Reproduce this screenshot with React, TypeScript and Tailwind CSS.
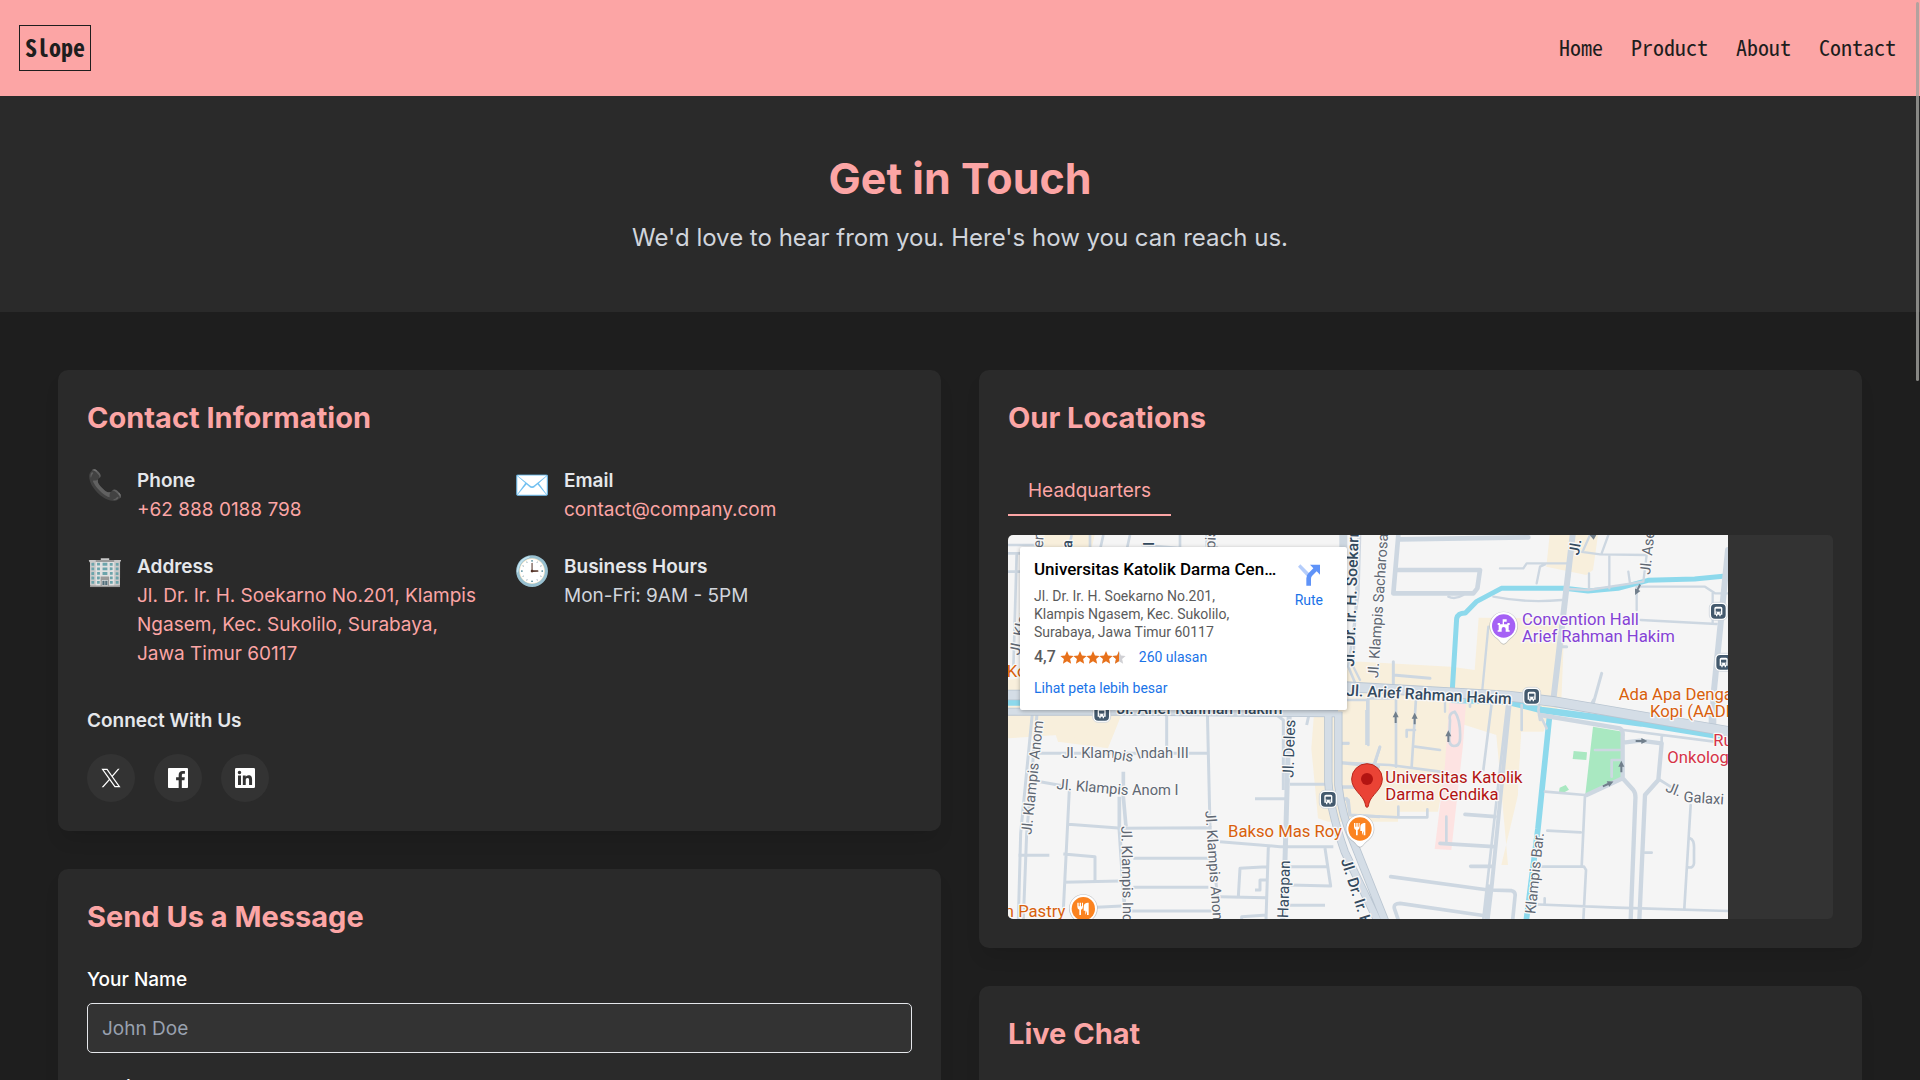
import React from "react";

const INTER = "font-['Inter',sans-serif]";

type LabelProps = {
  x: number;
  y: number;
  angle?: number;
  size?: number;
  color?: string;
  weight?: number;
  anchor?: "start" | "middle" | "end";
  children: string;
};

function MapLabel({ x, y, angle = 0, size = 44, color = "#5f6772", weight = 400, anchor = "start", children }: LabelProps) {
  return (
    <text
      x={x}
      y={y}
      transform={`rotate(${angle} ${x} ${y})`}
      fontSize={size}
      fontWeight={weight}
      fill={color}
      textAnchor={anchor}
      stroke="#f8f8f8"
      strokeWidth={8}
      strokeLinejoin="round"
      paintOrder="stroke"
    >
      {children}
    </text>
  );
}

function TransitStop({ x, y }: { x: number; y: number }) {
  return (
    <g transform={`translate(${x} ${y})`}>
      <rect x="-27" y="-27" width="54" height="54" rx="16" fill="#fff" stroke="#c4ccd4" strokeWidth="2" />
      <rect x="-22" y="-22" width="44" height="44" rx="12" fill="#43596d" />
      <path d="M-12 -9q0-5 5-5h14q5 0 5 5v19h-5v5h-4v-5h-6v5h-4v-5h-5z" fill="#fff" />
      <rect x="-8" y="-8" width="16" height="9" fill="#43596d" />
      <circle cx="-6" cy="5" r="2" fill="#43596d" />
      <circle cx="6" cy="5" r="2" fill="#43596d" />
    </g>
  );
}

function PoiPin({ x, y, color, kind }: { x: number; y: number; color: string; kind: "food" | "hall" }) {
  return (
    <g transform={`translate(${x} ${y})`}>
      <path d="M0 56C-7 56-12 46-20 39C-34 29-43 16-43 0A43 43 0 0 1 43 0C43 16 34 29 20 39C12 46 7 56 0 56Z" fill="#9aa0a6" opacity=".55" />
      <path d="M0 53C-7 53-12 43-20 36C-33 27-41 14-41 -1A41 41 0 0 1 41 -1C41 14 33 27 20 36C12 43 7 53 0 53Z" fill="#fff" />
      <circle r="35" fill={color} />
      {kind === "food" ? (
        <path
          d="M-18 -18v12q0 7 6 9v16h5V3q6-2 6-9v-12h-3v11h-3v-11h-4v11h-3v-11zM6 19V6H1v-12q0-10 11-12h4v37h-5V6z"
          fill="#fff"
        />
      ) : (
        <path d="M-18 17V13h3V-3h-3v-6h7v4h8v-15h12v7H1v8h10v-4h7v6h-3v16h3v4H6V9a6 6 0 0 0-12 0v8z" fill="#fff" />
      )}
    </g>
  );
}

function Arrow({ x, y, angle = 0 }: { x: number; y: number; angle?: number }) {
  return (
    <path
      transform={`translate(${x} ${y}) rotate(${angle})`}
      d="M0 -18L9 0H3V17H-3V0H-9Z"
      fill="#717f8c"
    />
  );
}

function CampusMap() {
  return (
    <svg
      viewBox="0 0 2160 1152"
      className="block h-96 w-[720px] max-w-full shrink-0 font-['Roboto',sans-serif]"
      preserveAspectRatio="xMinYMin slice"
      role="img"
      aria-label="Map of Universitas Katolik Darma Cendika"
    >
      <rect width="2160" height="1152" fill="#f5f5f5" />

      {/* Built-up blocks */}
      <g fill="#f8efdc">
        <path d="M90 0H260L240 90H80zM0 435L36 430V540H340L300 640L150 620L150 600L0 610z" />
        <path d="M930 380H1060L1330 395L1400 405L1412 248L1670 250L1660 500L1600 600L1540 590L1530 780L1480 990H1500L1465 600L1340 560L1290 830L1170 830V860H960L930 850L910 640z" />
        <path d="M1625 0H1770L1755 105L1735 120L1615 95z" />
      </g>
      <path d="M0 495H310L300 580L150 620L130 560L0 600z" fill="#f8efdc" />
      <path d="M1325 490H1375L1365 630L1330 945L1280 942L1310 700z" fill="#fde3e2" />
      <path d="M1540 590H1610V560H1660L1610 600L1540 1150H1510z" fill="#f5f5f5" />
      <path d="M1755 575L1845 590L1845 725L1732 778zM1697 648L1737 652L1735 675L1694 672zM1655 758l18-8 10 14-18 10-12-4z" fill="#a9e8c1" />

      {/* Canal */}
      <g fill="none" stroke="#8dd9ec" strokeLinejoin="round">
        <path d="M1332 480L1346 250Q1350 234 1372 234L1405 200L1480 160H1670L1740 168L1830 160L1920 136L2060 132L2165 122" strokeWidth="15" />
        <path d="M0 502H60M1330 494L1500 500L1600 525L1900 565L2165 608" strokeWidth="20" />
        <path d="M1625 540L1590 880L1555 1155" strokeWidth="17" />
        <path d="M1695 0L1680 150M335 790V830" strokeWidth="8" />
      </g>

      {/* Minor streets, north */}
      <g transform="translate(996 -45)" fill="none" stroke="#cdd7e1" strokeWidth="7" strokeLinejoin="round" strokeLinecap="round">
        <path d="M55 45L40 440L60 480M480 145H550L560 130H685M590 190L600 140L615 133M460 230Q560 250 665 240M720 95L780 103L920 105L910 185L745 210L685 207M750 45L730 90M805 45L785 100M808 105V205M747 160V205M865 155L870 190M890 200V270M900 200H1095L1125 220H1164M1118 220V310M902 300L1130 312M445 320L425 530M325 230Q345 240 370 225M315 530V575M370 535V545" />
        <path d="M175 45L160 220H400L412 205L420 150H175M180 58L565 52" strokeWidth="14" />
        <path d="M160 425V500M160 465L270 475M785 460L760 550M660 380H680" strokeWidth="9" />
        <path d="M0 498H160V535H85V675M0 540H85M168 540V740M228 535L215 740M200 650V630H225M225 680L300 690M502 550L430 1195M545 555V630M455 550L430 750M390 540V560" strokeWidth="8" />
        <path d="M698 45L640 540M1164 90L1120 530V620" strokeWidth="18" />
      </g>
      <g transform="translate(-24 -45)" fill="none" stroke="#cdd7e1" strokeWidth="8">
        <path d="M24 75H110M24 100H150M24 155H70M50 100L40 450M215 45L205 90M270 45V90M310 45L300 90M390 45L380 90M425 75L550 85M540 45V80M620 45V80" />
        <path d="M1030 45V90L1000 570" strokeWidth="24" />
        <path d="M1080 45L1075 220L1045 440L1070 500" />
      </g>

      {/* Minor streets, south-west */}
      <g transform="translate(-24 495)" fill="none" stroke="#cdd7e1" strokeWidth="9" strokeLinejoin="round">
        <path d="M98 30L62 400L55 660M112 30L80 400L70 660M55 466H148M115 160H628M120 245L205 260M208 270L190 630M205 373L365 385L635 383M190 462L285 470V545M190 547L360 543M400 475H630M400 562H625M290 622L365 618M390 633H635M500 40V150M622 30L630 380L660 660M680 45H830L850 60V270M870 253H975M765 296H855M660 425L840 440H1000M805 440L798 660M975 445L992 558L870 555M870 500H985M715 590L720 505L800 500M765 570H780V540H800M660 590L798 593M870 616H975M725 660V650L800 645M300 560" />
        <path d="M370 215V290L378 380M358 290V385L375 640" strokeWidth="11" />
        <path d="M868 30L855 480L848 660" strokeWidth="15" />
        <path d="M920 75L930 30M1020 130H1048M1100 30V135M1020 188L1140 200M1020 260H1060M1030 295L1045 300L1050 345L1140 350M1120 200L1140 140" />
      </g>

      {/* Minor streets, south-east */}
      <g transform="translate(996 495)" fill="none" stroke="#cdd7e1" strokeWidth="8" strokeLinejoin="round" strokeLinecap="round">
        <path d="M0 130H25M82 0V130M120 140L105 190M0 188L150 195L300 215M10 262H100M20 295L30 345L175 352H262V328M175 350V320M319 350V428M330 60Q325 40 344 35Q363 60 360 120Q358 138 342 138Q325 136 328 110zM615 275L735 285M735 285L725 500M622 392L722 397M605 500H732L738 510L730 660M560 612L830 623L1164 633M614 595V610M765 150H840M840 180H815V230M600 45L620 85M600 60L595 30L600 0M850 90L1164 130M965 110V130M1052 315L1033 625M1050 415Q1064 420 1062 450V490Q1060 505 1045 502M915 458H935M750 20L760 0M1110 30V80M960 240L1000 265" />
        <path d="M375 343L465 350M300 430L460 440M392 499H455M152 530L445 570L515 572Q528 575 525 590L518 660M440 648L180 610Q160 610 163 625L175 660" strokeWidth="11" />
        <path d="M510 0L455 560L443 660" strokeWidth="12" />
        <path d="M445 560L440 660" strokeWidth="14" />
        <path d="M600 45L840 85Q850 90 848 110V235L880 270Q888 280 886 300L872 660M740 285L848 235M850 128L900 122L965 130L955 240L915 285L898 660" strokeWidth="13" />
      </g>

      {/* Arterial roads */}
      <g fill="none" stroke="#b9c5d1" strokeLinejoin="round">
        <path d="M0 480H340L980 500M1010 455L1500 483L1640 500L2165 590" strokeWidth="32" />
        <path d="M0 530H340L990 535" strokeWidth="24" />
        <path d="M961 530V740Q965 820 1010 950L1110 1160M991 530V750Q1000 840 1040 930L1132 1160" strokeWidth="25" />
      </g>
      <g fill="none" stroke="#d4dde6" strokeLinejoin="round">
        <path d="M0 480H340L980 500M1010 455L1500 483L1640 500L2165 590" strokeWidth="27" />
        <path d="M0 530H340L990 535" strokeWidth="19" />
        <path d="M961 530V740Q965 820 1010 950L1110 1160M991 530V750Q1000 840 1040 930L1132 1160" strokeWidth="20" />
      </g>

      <Arrow x={1163} y={547} />
      <Arrow x={1220} y={551} />
      <Arrow x={1321} y={604} />
      <Arrow x={1840} y={695} />
      <Arrow x={1900} y={618} angle={90} />
      <Arrow x={1800} y={747} angle={65} />
      <Arrow x={1889} y={164} angle={205} />
      <path d="M1745 0h20l-8 14z" fill="#717f8c" />

      {/* Street names */}
      <MapLabel x={104} y={40} angle={-85}>en</MapLabel>
      <MapLabel x={192} y={40} angle={-87} color="#344a5e" weight={500}>a</MapLabel>
      <MapLabel x={437} y={32} angle={-90} color="#344a5e" weight={500}>l</MapLabel>
      <MapLabel x={621} y={42} angle={-87}>pis</MapLabel>
      <MapLabel x={34} y={362} angle={-78}>Jl. Klampis</MapLabel>
      <MapLabel x={1038} y={395} angle={-88} color="#344a5e" weight={500} size={47}>Jl. Dr. Ir. H. Soekarno</MapLabel>
      <MapLabel x={1110} y={430} angle={-86}>Jl. Klampis Sacharosa</MapLabel>
      <MapLabel x={1712} y={62} angle={-80} color="#344a5e" weight={500}>Jl.</MapLabel>
      <MapLabel x={1926} y={120} angle={-84}>Jl. Asem</MapLabel>
      <MapLabel x={1014} y={482} angle={3} color="#344a5e" weight={500} size={47}>Jl. Arief Rahman Hakim</MapLabel>
      <MapLabel x={326} y={537} color="#344a5e" weight={500} size={47}>Jl. Arief Rahman Hakim</MapLabel>
      <MapLabel x={70} y={900} angle={-84}>Jl. Klampis Anom</MapLabel>
      <MapLabel x={162} y={668}>Jl. Klam</MapLabel>
      <MapLabel x={316} y={672} angle={9}>pis</MapLabel>
      <MapLabel x={380} y={668}>\ndah III</MapLabel>
      <MapLabel x={145} y={762} angle={5}>Jl. Klampis</MapLabel>
      <MapLabel x={372} y={780}>Anom I</MapLabel>
      <MapLabel x={340} y={874} angle={89}>Jl. Klampis Indah</MapLabel>
      <MapLabel x={592} y={828} angle={86}>Jl. Klampis Anom</MapLabel>
      <MapLabel x={856} y={728} angle={-88} color="#344a5e" size={46}>Jl. Deles</MapLabel>
      <MapLabel x={840} y={1150} angle={-88} color="#344a5e" size={46}>Harapan</MapLabel>
      <MapLabel x={998} y={975} angle={72} color="#344a5e" weight={500} size={46}>Jl. Dr. Ir. H.</MapLabel>
      <MapLabel x={1582} y={1138} angle={-84}>Klampis Bar.</MapLabel>
      <MapLabel x={1970} y={768} angle={22}>Jl.</MapLabel>
      <MapLabel x={2026} y={800} angle={4}>Galaxi</MapLabel>

      {/* Places */}
      <TransitStop x={281} y={535} />
      <TransitStop x={961} y={793} />
      <TransitStop x={1571} y={484} />
      <TransitStop x={2131} y={229} />
      <TransitStop x={2147} y={382} />
      <PoiPin x={1487} y={273} color="#a561f5" kind="hall" />
      <PoiPin x={1056} y={882} color="#fb8320" kind="food" />
      <PoiPin x={226} y={1121} color="#fb8320" kind="food" />
      <MapLabel x={1542} y={270} size={50} color="#8542d6">Convention Hall</MapLabel>
      <MapLabel x={1542} y={321} size={50} color="#8542d6">Arief Rahman Hakim</MapLabel>
      <MapLabel x={1832} y={496} size={50} color="#d9600c">Ada Apa Dengan</MapLabel>
      <MapLabel x={1926} y={546} size={50} color="#d9600c">Kopi (AADK)</MapLabel>
      <MapLabel x={2116} y={632} size={50} color="#d63347">Rumah</MapLabel>
      <MapLabel x={1978} y={683} size={50} color="#d63347">Onkologi</MapLabel>
      <MapLabel x={-4} y={427} size={50} color="#d9600c">Kopi</MapLabel>
      <MapLabel x={1002} y={905} size={50} color="#d9600c" anchor="end">Bakso Mas Roy</MapLabel>
      <MapLabel x={172} y={1146} size={50} color="#d9600c" anchor="end">n Pastry</MapLabel>
      <MapLabel x={1132} y={744} size={50} color="#b31412">Universitas Katolik</MapLabel>
      <MapLabel x={1132} y={794} size={50} color="#b31412">Darma Cendika</MapLabel>
      <path
        d="M1077 817C1073 817 1073 812 1071 804C1064 779 1031 764 1031 732A46 46 0 0 1 1123 732C1123 764 1090 779 1083 804C1081 812 1081 817 1077 817Z"
        fill="#ea4335"
        stroke="#b9271c"
        strokeWidth="3"
      />
      <circle cx="1077" cy="732" r="18" fill="#b31412" />
    </svg>
  );
}

const STAR = "M10 0l3 6.8 7.2.7-5.4 4.9 1.6 7.2L10 15.8l-6.3 3.8 1.6-7.2L-.2 7.500l7.200-.7z";

function Stars() {
  return (
    <svg viewBox="0 0 100 20" className="h-[13px] w-[66px]" role="img" aria-label="4.7 of 5 stars">
      {[0, 1, 2, 3].map((i) => (
        <path key={i} d={STAR} transform={`translate(${i * 20} 0)`} fill="#e7711b" />
      ))}
      <path d={STAR} transform="translate(80 0)" fill="#d0d0d4" />
      <path d="M90 0v15.800l-6.300 3.800 1.600-7.200-5.500-4.900 7.200-.7z" fill="#e7711b" />
    </svg>
  );
}

function PlaceCard() {
  return (
    <div className="absolute left-3 top-3 flex h-[163px] w-[327px] justify-between rounded-[2px] bg-white pl-[14px] pr-6 pt-3 font-['Roboto',sans-serif] text-[14px] leading-[18px] text-[#5b5b5b] shadow-[0_1px_4px_rgba(0,0,0,0.3)]">
      <div className="w-[246px]">
        <h3 className="truncate text-[17px] font-medium leading-5 text-black">Universitas Katolik Darma Cendika</h3>
        <p className="mt-2 w-[210px]">Jl. Dr. Ir. H. Soekarno No.201, Klampis Ngasem, Kec. Sukolilo, Surabaya, Jawa Timur 60117</p>
        <div className="mt-[7px] flex items-center">
          <span className="mr-1 text-[16px] font-medium">4,7</span>
          <Stars />
          <a href="#ulasan" className="ml-[13px] text-[#1a73e8]">260 ulasan</a>
        </div>
        <a href="#peta" className="mt-[13px] block text-[#1a73e8]">Lihat peta lebih besar</a>
      </div>
      <a href="#rute" className="flex h-14 flex-col items-center pt-[5px] text-[#1a73e8]">
        <svg viewBox="0 0 66 64" className="mb-[5px] h-[22px] w-[22px]" aria-hidden="true">
          <path d="M0 7L7 0L36 29L28 37z" fill="#b5cdfb" />
          <path d="M25 64V42Q25 32 32 26L46 12L36 1H66V31L56 21L42 35Q39 38 39 44V64z" fill="#5f93f8" />
        </svg>
        Rute
      </a>
    </div>
  );
}

function Card({ title, children }: { title: string; children?: React.ReactNode }) {
  return (
    <section className="rounded-[10px] bg-[#2a2a2a] p-[29px] shadow-[0_12px_18px_-4px_rgba(0,0,0,0.1)]">
      <h2 className="mb-[29px] text-[29px] font-bold leading-[38px] text-[#fca5a5]">{title}</h2>
      {children}
    </section>
  );
}

function InfoItem({ icon, label, href, children }: { icon: string; label: string; href?: string; children: string }) {
  return (
    <div className="flex items-start">
      <span className="mr-[14px] text-[29px] leading-[38px]" aria-hidden="true">{icon}</span>
      <div>
        <h3 className="font-semibold text-gray-200">{label}</h3>
        {href ? (
          <a href={href} className="block text-[#fca5a5]">{children}</a>
        ) : (
          <p className="text-gray-300">{children}</p>
        )}
      </div>
    </div>
  );
}

function SocialLink({ label, children }: { label: string; children: React.ReactNode }) {
  return (
    <a href="#social" aria-label={label} className="flex size-12 items-center justify-center rounded-full bg-[#333333] text-white">
      {children}
    </a>
  );
}

function Field({ id, label, placeholder, type = "text" }: { id: string; label: string; placeholder: string; type?: string }) {
  return (
    <div className="mb-5">
      <label htmlFor={id} className="mb-[9px] block font-medium text-white">{label}</label>
      <input
        id={id}
        type={type}
        placeholder={placeholder}
        className="block h-[50px] w-full rounded-[5px] border border-gray-200 bg-[#333333] px-[14px] text-white placeholder:text-gray-400"
      />
    </div>
  );
}

export default function App() {
  return (
    <div className={`h-screen overflow-y-auto bg-[#1e1e1e] text-[19px] leading-[29px] text-white [scrollbar-width:none] ${INTER}`}>
      <header className="flex h-24 items-center justify-between bg-[#fca5a5] pl-[19px] pr-6 font-['Noto_Sans_Mono_CJK_JP','Liberation_Mono',monospace] text-[22px] text-[#1e1e1e]">
        <a href="#home" className="flex h-[46px] items-center border border-[#1e1e1e] px-[5px] pb-1 text-[24px] font-bold">Slope</a>
        <nav className="flex gap-7 pb-1">
          <a href="#home">Home</a>
          <a href="#product">Product</a>
          <a href="#about">About</a>
          <a href="#contact">Contact</a>
        </nav>
      </header>

      <div className="bg-[#2a2a2a] pb-[57px] pt-[58px] text-center">
        <h1 className="mb-[19px] text-[43px] font-bold leading-[48px] text-[#fca5a5]">Get in Touch</h1>
        <p className="text-[24px] leading-[34px] text-gray-300">We'd love to hear from you. Here's how you can reach us.</p>
      </div>

      <main className="grid grid-cols-2 items-start gap-[38px] px-[58px] py-[58px]">
        <div className="flex flex-col gap-[38px]">
          <Card title="Contact Information">
            <div className="mb-[38px] grid grid-cols-2 gap-x-[29px] gap-y-[28px]">
              <InfoItem icon="📞" label="Phone" href="#phone">+62 888 0188 798</InfoItem>
              <InfoItem icon="✉️" label="Email" href="#email">contact@company.com</InfoItem>
              <InfoItem icon="🏢" label="Address" href="#address">Jl. Dr. Ir. H. Soekarno No.201, Klampis Ngasem, Kec. Sukolilo, Surabaya, Jawa Timur 60117</InfoItem>
              <InfoItem icon="🕒" label="Business Hours">Mon-Fri: 9AM - 5PM</InfoItem>
            </div>
            <h3 className="mb-[19px] font-semibold text-gray-200">Connect With Us</h3>
            <div className="flex gap-[19px]">
              <SocialLink label="X">
                <svg viewBox="0 0 24 24" className="size-5" fill="currentColor" aria-hidden="true">
                  <path fillRule="evenodd" d="M.5 1h7.200l5.600 7.900L20.300 1h2L14.200 10.200 23.500 23.200h-7.200l-6-8.500L2.900 23.200H.8L9.400 13.400zM3.300 2.500l13.800 19.200h3.500L6.900 2.500z" />
                </svg>
              </SocialLink>
              <SocialLink label="Facebook">
                <svg viewBox="0 0 24 24" className="size-5" fill="currentColor" aria-hidden="true">
                  <path d="M22.700 0H1.300C.6 0 0 .6 0 1.300v21.400c0 .7.6 1.300 1.300 1.300h11.500v-9.300H9.700v-3.600h3.100V8.400c0-3.100 1.900-4.800 4.700-4.800 1.300 0 2.500.1 2.800.1V7h-1.900c-1.500 0-1.800.7-1.800 1.800v2.300h3.600l-.5 3.600h-3.100V24h6.100c.7 0 1.300-.6 1.300-1.300V1.300C24 .6 23.400 0 22.700 0z" />
                </svg>
              </SocialLink>
              <SocialLink label="LinkedIn">
                <svg viewBox="0 0 24 24" className="size-5" fill="currentColor" aria-hidden="true">
                  <path fillRule="evenodd" d="M1.500 0h21Q24 0 24 1.500v21q0 1.500-1.500 1.500h-21Q0 24 0 22.500v-21Q0 0 1.500 0zM3.600 9h3.600v11.500H3.600zM5.400 3.300a2.100 2.100 0 1 1 0 4.200 2.100 2.100 0 0 1 0-4.200zM9.400 9h3.400v1.600c.6-1 1.700-1.900 3.400-1.900 3.600 0 4.300 2.400 4.300 5.500v6.300h-3.600v-5.600c0-1.300 0-3-1.900-3s-2.100 1.500-2.100 2.900v5.700H9.400z" />
                </svg>
              </SocialLink>
            </div>
          </Card>

          <Card title="Send Us a Message">
            <form>
              <Field id="name" label="Your Name" placeholder="John Doe" />
              <Field id="email" label="Email" placeholder="john@example.com" type="email" />
            </form>
          </Card>
        </div>

        <div className="flex flex-col gap-[38px]">
          <Card title="Our Locations">
            <button type="button" className="mb-[19px] block h-[50px] border-b-2 border-[#fca5a5] px-5 text-[#fca5a5]">Headquarters</button>
            <div className="relative overflow-hidden rounded-[5px] bg-[#333333]">
              <CampusMap />
              <PlaceCard />
            </div>
          </Card>
          <Card title="Live Chat" />
        </div>
      </main>

      <div className="pointer-events-none fixed right-px top-0.5 h-[379px] w-[3px] rounded-full bg-[#a0a09c]/80" />
    </div>
  );
}
